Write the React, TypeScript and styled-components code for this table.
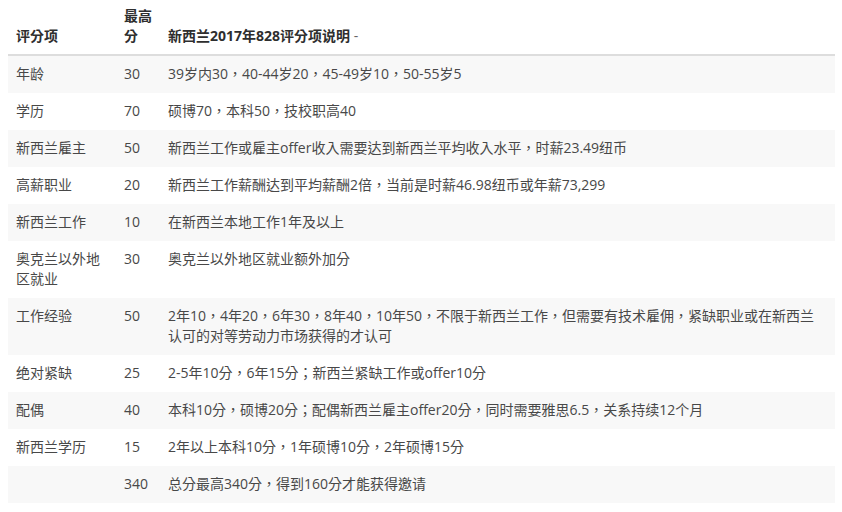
import React from 'react';
import styled, { createGlobalStyle } from 'styled-components';

const GlobalStyle = createGlobalStyle`
  body {
    margin: 0;
    background: #fff;
    font-family: 'Open Sans', 'Noto Sans CJK TC', sans-serif;
    font-size: 14px;
    color: #484848;
  }
`;

const Page = styled.div`
  width: 842px;
  height: 512px;
  padding: 0 7px 0 8px;
  box-sizing: border-box;
  overflow: hidden;
`;

const Table = styled.table`
  width: 100%;
  table-layout: fixed;
  border-collapse: collapse;
  border-spacing: 0;
  line-height: 20px;
`;

const Col = styled.col<{ w?: number }>`
  width: ${(props) => (props.w ? `${props.w}px` : 'auto')};
`;

const HeadCell = styled.th`
  padding: 6px 8px 8px;
  text-align: left;
  vertical-align: bottom;
  font-weight: bold;
  color: #2e2e2e;
  border-bottom: 2px solid #dddddd;
`;

const Dash = styled.span`
  font-weight: normal;
  color: #666;
`;

const Row = styled.tr<{ striped: boolean }>`
  background: ${(props) => (props.striped ? '#f8f8f8' : '#fff')};

  & + & > td {
    border-top: 1px solid #dddddd;
  }
`;

const Cell = styled.td`
  padding: 8px 8px 9px;
  vertical-align: top;
`;

interface IItem {
  name: string;
  score: string;
  desc: string;
}

const items: IItem[] = [
  { name: '年龄', score: '30', desc: '39岁内30，40-44岁20，45-49岁10，50-55岁5' },
  { name: '学历', score: '70', desc: '硕博70，本科50，技校职高40' },
  {
    name: '新西兰雇主',
    score: '50',
    desc: '新西兰工作或雇主offer收入需要达到新西兰平均收入水平，时薪23.49纽币',
  },
  {
    name: '高薪职业',
    score: '20',
    desc: '新西兰工作薪酬达到平均薪酬2倍，当前是时薪46.98纽币或年薪73,299',
  },
  { name: '新西兰工作', score: '10', desc: '在新西兰本地工作1年及以上' },
  { name: '奥克兰以外地区就业', score: '30', desc: '奥克兰以外地区就业额外加分' },
  {
    name: '工作经验',
    score: '50',
    desc: '2年10，4年20，6年30，8年40，10年50，不限于新西兰工作，但需要有技术雇佣，紧缺职业或在新西兰认可的对等劳动力市场获得的才认可',
  },
  {
    name: '绝对紧缺',
    score: '25',
    desc: '2-5年10分，6年15分；新西兰紧缺工作或offer10分',
  },
  {
    name: '配偶',
    score: '40',
    desc: '本科10分，硕博20分；配偶新西兰雇主offer20分，同时需要雅思6.5，关系持续12个月',
  },
  { name: '新西兰学历', score: '15', desc: '2年以上本科10分，1年硕博10分，2年硕博15分' },
  { name: '', score: '340', desc: '总分最高340分，得到160分才能获得邀请' },
];

function App() {
  return (
    <Page>
      <GlobalStyle />
      <Table>
        <colgroup>
          <Col w={108} />
          <Col w={44} />
          <Col />
        </colgroup>
        <thead>
          <tr>
            <HeadCell>评分项</HeadCell>
            <HeadCell>最高分</HeadCell>
            <HeadCell>
              新西兰2017年828评分项说明 <Dash>-</Dash>
            </HeadCell>
          </tr>
        </thead>
        <tbody>
          {items.map((item, i) => (
            <Row key={`item${i}`} striped={i % 2 === 0}>
              <Cell>{item.name}</Cell>
              <Cell>{item.score}</Cell>
              <Cell>{item.desc}</Cell>
            </Row>
          ))}
        </tbody>
      </Table>
    </Page>
  );
}

export default App;
